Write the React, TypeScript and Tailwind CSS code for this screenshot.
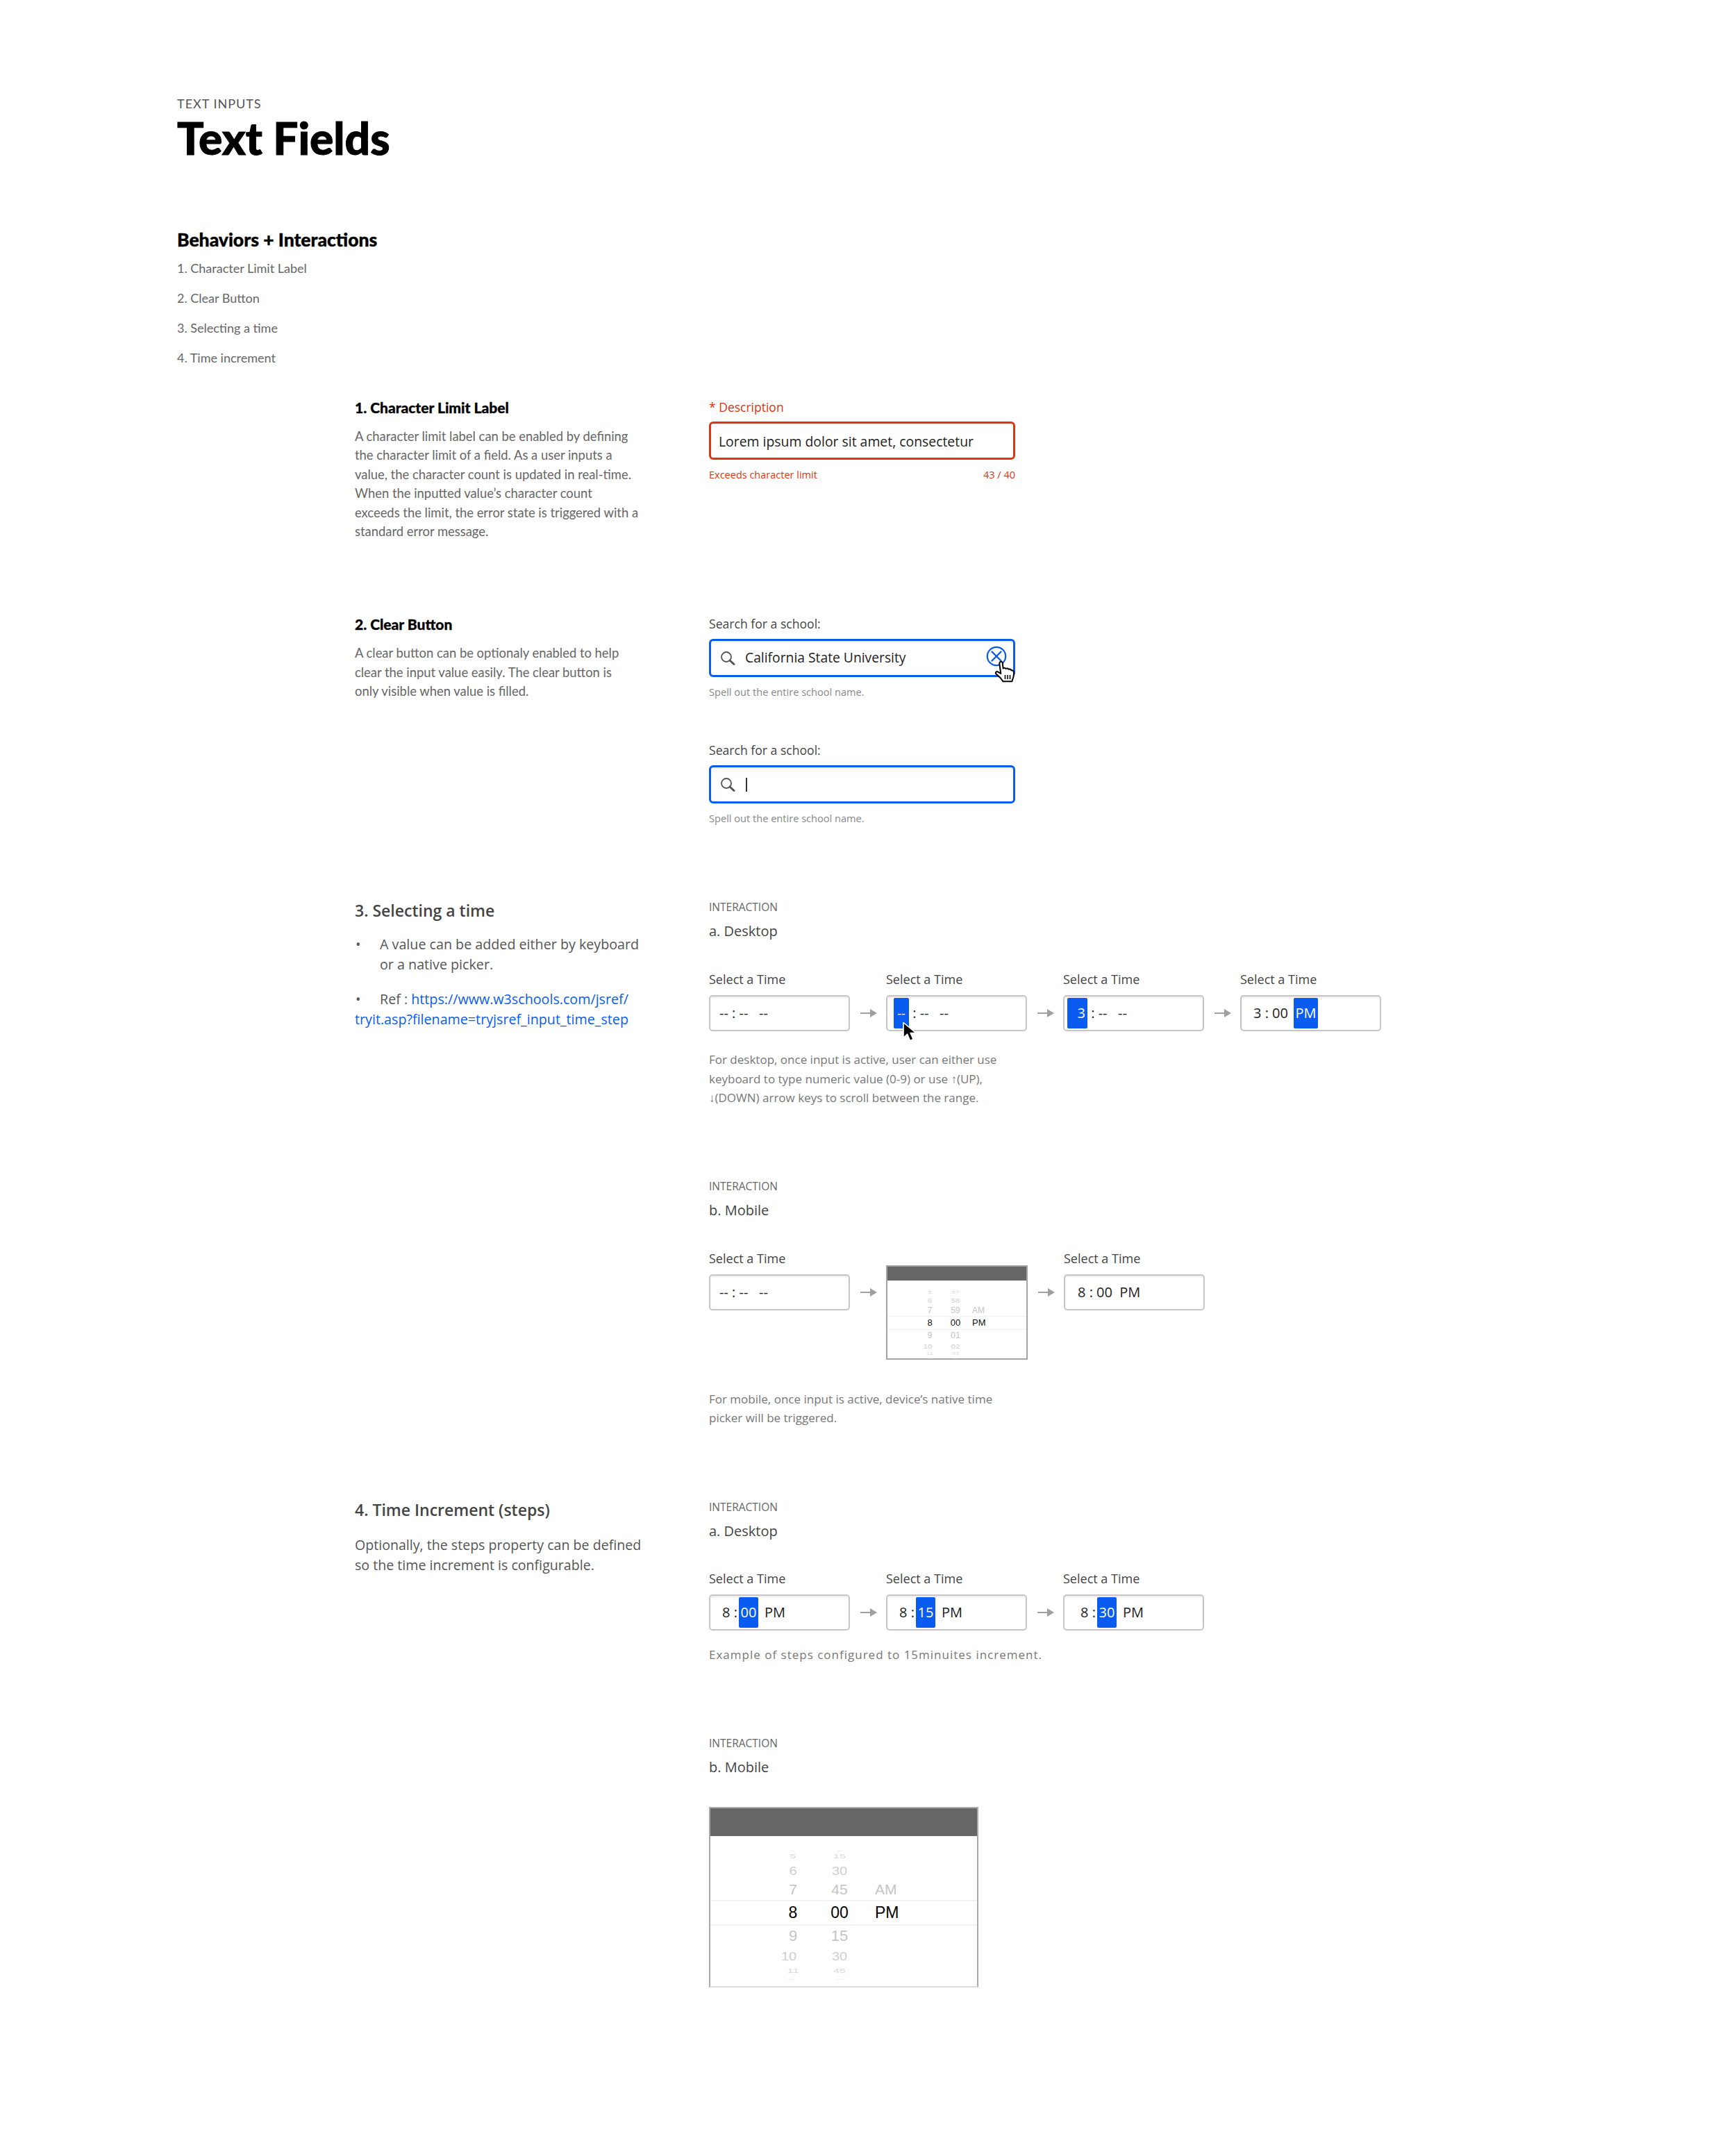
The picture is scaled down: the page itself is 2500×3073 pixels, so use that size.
import { ReactNode } from 'react';
import clsx from 'clsx';

type WheelRow = {
  h: string;
  m: string;
  a?: string;
  row: string;
  text: string;
  hourOffset?: string;
};

const largeRows: WheelRow[] = [
  { h: '4', m: '00', row: 'h-[3px]', text: 'text-[8px] text-[#ddd] scale-y-[.3]' },
  { h: '5', m: '15', row: 'h-[18px]', text: 'text-[16px] text-[#d8d8d8] scale-y-[.6]' },
  { h: '6', m: '30', row: 'h-[23px]', text: 'text-[20px] text-[#cfcfcf] scale-y-[.85]' },
  { h: '7', m: '45', a: 'AM', row: 'h-[31px]', text: 'text-[21px] text-[#c4c4c4]' },
  { h: '8', m: '00', a: 'PM', row: 'h-[37px] border-y-2 border-[#f1f1f1]', text: 'text-[23px] text-black' },
  { h: '9', m: '15', row: 'h-[30px]', text: 'text-[22px] text-[#c4c4c4]' },
  { h: '10', m: '30', row: 'h-[27px]', text: 'text-[20px] text-[#cfcfcf] scale-y-[.85]', hourOffset: '-translate-x-[6px]' },
  { h: '11', m: '45', row: 'h-[16px]', text: 'text-[16px] text-[#d8d8d8] scale-y-[.6]' },
  { h: '12', m: '00', row: 'h-[3px]', text: 'text-[8px] text-[#ddd] scale-y-[.3]', hourOffset: '-translate-x-[4px]' },
];

const smallRows: WheelRow[] = [
  { h: '4', m: '56', row: 'h-[2px]', text: 'text-[6px] text-[#ddd] scale-y-[.3]' },
  { h: '5', m: '57', row: 'h-[11px]', text: 'text-[10px] text-[#d8d8d8] scale-y-[.6]' },
  { h: '6', m: '58', row: 'h-[12px]', text: 'text-[11.5px] text-[#cfcfcf] scale-y-[.85]' },
  { h: '7', m: '59', a: 'AM', row: 'h-[16px]', text: 'text-[12px] text-[#c4c4c4]' },
  { h: '8', m: '00', a: 'PM', row: 'h-[20px] border-y border-[#f1f1f1]', text: 'text-[13px] text-[#111]' },
  { h: '9', m: '01', row: 'h-[17px]', text: 'text-[12.5px] text-[#c4c4c4]' },
  { h: '10', m: '02', row: 'h-[13px]', text: 'text-[11.5px] text-[#cfcfcf] scale-y-[.85]', hourOffset: '-translate-x-[3px]' },
  { h: '11', m: '03', row: 'h-[8px]', text: 'text-[9px] text-[#d8d8d8] scale-y-[.6]' },
  { h: '12', m: '04', row: 'h-[2px]', text: 'text-[6px] text-[#ddd] scale-y-[.3]' },
];

function SearchIcon() {
  return (
    <svg width="22" height="22" viewBox="0 0 22 22" fill="none" className="shrink-0">
      <circle cx="9" cy="9" r="7" stroke="#555" strokeWidth="1.8" />
      <path d="M14 14l6 5.5" stroke="#555" strokeWidth="3" strokeLinecap="round" />
    </svg>
  );
}

function ClearIcon() {
  return (
    <svg width="30" height="30" viewBox="0 0 30 30" fill="none">
      <circle cx="15" cy="15" r="13.2" stroke="#0a5cf0" strokeWidth="2.2" />
      <path d="M8.5 8.5l13 13M21.5 8.5l-13 13" stroke="#0a5cf0" strokeWidth="2.4" strokeLinecap="round" />
    </svg>
  );
}

function HandCursor() {
  return (
    <svg width="30" height="32" viewBox="0 0 30 32" className="absolute left-[408px] top-[28px]">
      <path
        d="M8 2.5c1.5-1.4 3.6-.6 3.8 1.5l.8 7.5c1.5-1 3.2-.8 4 .5 1.4-.9 3.2-.6 4 .8 1.5-.7 3.3 0 3.9 1.5 1.3-.3 3 .4 3.3 2 .5 3.5.2 7-1.4 10.5l-1 3.5H12.5L9 25.5 2.5 19.5c-1.6-1.7.3-4.3 2.4-3.1l4.4 2.6L7.3 5c-.1-1 .1-1.9.7-2.5z"
        fill="#fff"
        stroke="#000"
        strokeWidth="2"
        strokeLinejoin="round"
      />
      <path d="M15.5 21v6M19 21v6M22.5 21v6" stroke="#000" strokeWidth="1.6" />
    </svg>
  );
}

function ArrowCursor() {
  return (
    <svg width="22" height="30" viewBox="0 0 22 30" className="absolute left-[21px] top-[36px]">
      <path d="M2 1.5v22l5.6-5.3 4 9.3 4.5-1.9-4-9.100h7.900z" fill="#000" stroke="#fff" strokeWidth="1.6" strokeLinejoin="round" />
    </svg>
  );
}

function FlowArrow() {
  return (
    <div className="w-[52px] flex justify-center shrink-0">
      <svg width="24" height="14" viewBox="0 0 24 14" className="translate-x-[1px]">
        <path d="M0 7h16" stroke="#a0a0a0" strokeWidth="2" />
        <path d="M14 1l10 6-10 6z" fill="#a0a0a0" />
      </svg>
    </div>
  );
}

function Sel({ className, children }: { className: string; children: ReactNode }) {
  return (
    <span className={clsx('h-[44px] bg-[#0a5cf0] text-white rounded-[2px] flex items-center justify-center shrink-0', className)}>
      {children}
    </span>
  );
}

function TimeInput({ children, cursor }: { children: ReactNode; cursor?: boolean }) {
  return (
    <div className="relative w-[203px] h-[52px] border-2 border-[#c6c6c6] rounded-[5px] shadow-[inset_0_2px_2px_#ececec] flex items-center whitespace-pre text-[20px] text-[#222] font-['Open_Sans']">
      {children}
      {cursor && <ArrowCursor />}
    </div>
  );
}

function TimeLabel({ children }: { children: ReactNode }) {
  return <div className="h-[24px] mb-[11px] leading-[24px] text-[18px] font-medium text-[#444] font-['Open_Sans']">{children}</div>;
}

function TimeField({ children, cursor }: { children: ReactNode; cursor?: boolean }) {
  return (
    <div className="w-[203px] shrink-0">
      <TimeLabel>Select a Time</TimeLabel>
      <TimeInput cursor={cursor}>{children}</TimeInput>
    </div>
  );
}

function Interaction({ title, top }: { title: string; top: string }) {
  return (
    <div className={top}>
      <div className="h-[20px] leading-[20px] text-[15.5px] text-[#666] font-['Open_Sans']">INTERACTION</div>
      <div className="h-[28px] mt-[11px] leading-[28px] text-[20px] text-[#444] font-['Open_Sans']">{title}</div>
    </div>
  );
}

function Note({ className, children }: { className?: string; children: ReactNode }) {
  return <p className={clsx("text-[17px] leading-[27.5px] text-[#777] whitespace-nowrap font-['Open_Sans']", className)}>{children}</p>;
}

function Wheel({ rows, grid, third }: { rows: WheelRow[]; grid: string; third: string }) {
  return (
    <>
      {rows.map(r => (
        <div key={r.h} className={clsx("grid items-center font-['Liberation_Sans'] leading-none", grid, r.row)}>
          <span className={clsx('block text-center', r.text, r.hourOffset)}>{r.h}</span>
          <span className={clsx('block text-center', r.text)}>{r.m}</span>
          <span className={third}>
            <span className={clsx('block', r.text)}>{r.a}</span>
          </span>
        </div>
      ))}
    </>
  );
}

function FieldLabel({ children }: { children: ReactNode }) {
  return <div className="h-[26px] leading-[26px] text-[17.6px] font-medium text-[#444] font-['Open_Sans']">{children}</div>;
}

function SearchField({ clear, value }: { clear?: boolean; value?: string }) {
  return (
    <>
      <FieldLabel>Search for a school:</FieldLabel>
      <div className="relative w-[441px] h-[55px] mt-[9px] border-[3px] border-[#0a5cf0] rounded-[6px] flex items-center pl-[13px] text-[19.3px] text-[#222] font-['Open_Sans'] shadow-[inset_0_2px_2px_#eee]">
        <SearchIcon />
        {value ? <span className="ml-[14px]">{value}</span> : <span className="ml-[15px] w-[2px] h-[20px] bg-[#333]" />}
        {clear && (
          <div className="absolute right-[9px] top-[7px]">
            <ClearIcon />
          </div>
        )}
        {clear && <HandCursor />}
      </div>
      <div className="h-[24px] mt-[9px] leading-[24px] text-[14.6px] text-[#888] font-['Open_Sans']">Spell out the entire school name.</div>
    </>
  );
}

export default function App() {
  return (
    <div className="min-h-[3073px] bg-white pl-[255px] pt-[137px] font-['Open_Sans'] text-[#555]">
      {/* Header */}
      <div className="h-[24px] leading-[24px] text-[18px] tracking-[1px] text-[#555] font-['Lato']">TEXT INPUTS</div>
      <h1 className="h-[80px] -mt-[2px] leading-[80px] text-[64px] font-black text-black font-['Lato'] [-webkit-text-stroke:1px_black]">Text Fields</h1>

      <h2 className="h-[32px] mt-[90px] leading-[32px] text-[26.5px] font-black text-black font-['Lato'] [-webkit-text-stroke:0.4px_black]">Behaviors + Interactions</h2>
      <ul className="mt-[13px] flex flex-col gap-[19px] text-[18px] leading-[24px] text-[#666] font-['Lato']">
        <li>1. Character Limit Label</li>
        <li>2. Clear Button</li>
        <li>3. Selecting a time</li>
        <li>4. Time increment</li>
      </ul>

      {/* 1. Character limit */}
      <section className="mt-[46px] ml-[256px] grid grid-cols-[510px_441px]">
        <div>
          <h3 className="h-[28px] leading-[28px] text-[21px] font-black text-black font-['Lato'] [-webkit-text-stroke:0.3px_black]">1. Character Limit Label</h3>
          <p className="mt-[14px] text-[18.4px] leading-[27.4px] text-[#666] whitespace-nowrap font-['Lato']">
            A character limit label can be enabled by defining<br />
            the character limit of a field. As a user inputs a<br />
            value, the character count is updated in real-time.<br />
            When the inputted value’s character count<br />
            exceeds the limit, the error state is triggered with a<br />
            standard error message.
          </p>
        </div>
        <div>
          <div className="h-[26px] leading-[26px] text-[17.5px] font-medium text-[#e0350c] font-['Open_Sans']">* Description</div>
          <div className="h-[55px] mt-[8px] border-[3px] border-[#e0350c] rounded-[6px] flex items-center pl-[11px] pt-[2px] text-[19.4px] text-[#222] shadow-[inset_0_2px_2px_#eee]">
            Lorem ipsum dolor sit amet, consectetur
          </div>
          <div className="h-[24px] mt-[10px] leading-[24px] text-[14.5px] text-[#e0350c] flex justify-between">
            <span>Exceeds character limit</span>
            <span>43 / 40</span>
          </div>
        </div>
      </section>

      {/* 2. Clear button */}
      <section className="mt-[106px] ml-[256px] grid grid-cols-[510px_441px]">
        <div>
          <h3 className="h-[28px] leading-[28px] text-[21px] font-black text-black font-['Lato'] [-webkit-text-stroke:0.3px_black]">2. Clear Button</h3>
          <p className="mt-[14px] text-[18.4px] leading-[27.4px] text-[#666] whitespace-nowrap font-['Lato']">
            A clear button can be optionaly enabled to help<br />
            clear the input value easily. The clear button is<br />
            only visible when value is filled.
          </p>
        </div>
        <div>
          <SearchField clear value="California State University" />
          <div className="h-[59px]" />
          <SearchField />
        </div>
      </section>

      {/* 3. Selecting a time */}
      <section className="mt-[105px] ml-[256px] grid grid-cols-[510px_1fr]">
        <div>
          <h3 className="h-[32px] leading-[32px] text-[23px] font-semibold text-[#444]">3. Selecting a time</h3>
          <div className="mt-[18px] text-[19.7px] leading-[29px] text-[#555] whitespace-nowrap">
            <div className="flex">
              <span className="w-[36px] pl-[1px]">•</span>
              <span>A value can be added either by keyboard<br />or a native picker.</span>
            </div>
            <div className="mt-[21px]">
              <span className="inline-block w-[36px] pl-[1px]">•</span>Ref : <span className="text-[#0a5cf0]">https://www.w3schools.com/jsref/<br />tryit.asp?filename=tryjsref_input_time_step</span>
            </div>
          </div>
        </div>
        <div className="pt-[1px]">
          <Interaction title="a. Desktop" top="" />
          <div className="mt-[43px] flex items-center">
            <TimeField><span className="pl-[13px]">{'-- : --   --'}</span></TimeField>
            <div className="mt-[35px]"><FlowArrow /></div>
            <TimeField cursor>
              <Sel className="w-[22px] ml-[9px] text-[18px]">--</Sel>
              <span>{' : --   --'}</span>
            </TimeField>
            <div className="mt-[35px]"><FlowArrow /></div>
            <TimeField>
              <Sel className="w-[29px] ml-[4px] justify-end pr-[3px]">3</Sel>
              <span>{' : --   --'}</span>
            </TimeField>
            <div className="mt-[35px]"><FlowArrow /></div>
            <TimeField>
              <span className="pl-[17px] w-[75px]">3 : 00</span>
              <Sel className="w-[35px]">PM</Sel>
            </TimeField>
          </div>
          <Note className="mt-[27px]">
            For desktop, once input is active, user can either use<br />
            keyboard to type numeric value (0-9) or use ↑(UP),<br />
            ↓(DOWN) arrow keys to scroll between the range.
          </Note>

          <Interaction title="b. Mobile" top="mt-[103px]" />
          <div className="mt-[43px] flex items-start">
            <TimeField><span className="pl-[13px]">{'-- : --   --'}</span></TimeField>
            <div className="mt-[54px]"><FlowArrow /></div>
            <div className="w-[204px] h-[136px] mt-[22px] border-2 border-[#a3a3a3] shrink-0">
              <div className="h-[20px] bg-[#666]" />
              <div className="pt-[10px]">
                <Wheel rows={smallRows} grid="pl-[40px] grid-cols-[42px_32px_1fr]" third="pl-[8px]" />
              </div>
            </div>
            <div className="mt-[54px]"><FlowArrow /></div>
            <TimeField><span className="pl-[18px]">8 : 00  PM</span></TimeField>
          </div>
          <Note className="mt-[43px]">
            For mobile, once input is active, device’s native time<br />
            picker will be triggered.
          </Note>
        </div>
      </section>

      {/* 4. Time increment */}
      <section className="mt-[102px] ml-[256px] grid grid-cols-[510px_1fr]">
        <div>
          <h3 className="h-[32px] leading-[32px] text-[23px] font-semibold text-[#444]">4. Time Increment (steps)</h3>
          <p className="mt-[20px] text-[19.6px] leading-[29px] text-[#555] whitespace-nowrap">
            Optionally, the steps property can be defined<br />
            so the time increment is configurable.
          </p>
        </div>
        <div className="pt-[2px]">
          <Interaction title="a. Desktop" top="" />
          <div className="mt-[42px] flex items-center">
            <TimeField>
              <span className="pl-[17px] w-[41px]">8 :</span>
              <Sel className="w-[28px]">00</Sel>
              <span className="pl-[9px]">PM</span>
            </TimeField>
            <div className="mt-[35px]"><FlowArrow /></div>
            <TimeField>
              <span className="pl-[17px] w-[41px]">8 :</span>
              <Sel className="w-[28px]">15</Sel>
              <span className="pl-[9px]">PM</span>
            </TimeField>
            <div className="mt-[35px]"><FlowArrow /></div>
            <TimeField>
              <span className="pl-[23px] w-[47px]">8 :</span>
              <Sel className="w-[28px]">30</Sel>
              <span className="pl-[9px]">PM</span>
            </TimeField>
          </div>
          <Note className="mt-[21px] tracking-[1px]">Example of steps configured to 15minuites increment.</Note>

          <Interaction title="b. Mobile" top="mt-[104px]" />
          <div className="w-[388px] h-[260px] mt-[43px] border-x-2 border-t-2 border-x-[#aaa] border-t-[#aaa] border-b-2 border-b-[#ddd]">
            <div className="h-[40px] bg-[#666]" />
            <div className="pt-[17px]">
              <Wheel rows={largeRows} grid="pl-[79px] grid-cols-[80px_54px_1fr]" third="pl-[24px]" />
            </div>
          </div>
        </div>
      </section>
    </div>
  );
}
